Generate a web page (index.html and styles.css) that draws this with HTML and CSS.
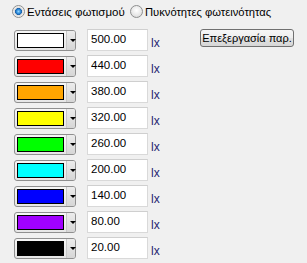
FILE: index.html
```html
<!DOCTYPE html>
<html>
<head>
    <title>Φωτισμός</title>
    <link rel="stylesheet" href="styles.css">
</head>
<body>
    <div class="modes">
        <label class="radio first"><span class="dot on"></span>Εντάσεις φωτισμού</label>
        <label class="radio"><span class="dot"></span>Πυκνότητες φωτεινότητας</label>
    </div>
    <div class="main">
        <div class="rows">
            <div class="row"><span class="combo"><span class="swatch" style="background:#ffffff"></span><span class="drop"></span></span><input class="value" value="500.00"><span class="unit">lx</span></div>
            <div class="row"><span class="combo"><span class="swatch" style="background:#ff0000"></span><span class="drop"></span></span><input class="value" value="440.00"><span class="unit">lx</span></div>
            <div class="row"><span class="combo"><span class="swatch" style="background:#ffa500"></span><span class="drop"></span></span><input class="value" value="380.00"><span class="unit">lx</span></div>
            <div class="row"><span class="combo"><span class="swatch" style="background:#ffff00"></span><span class="drop"></span></span><input class="value" value="320.00"><span class="unit">lx</span></div>
            <div class="row"><span class="combo"><span class="swatch" style="background:#00ff00"></span><span class="drop"></span></span><input class="value" value="260.00"><span class="unit">lx</span></div>
            <div class="row"><span class="combo"><span class="swatch" style="background:#00ffff"></span><span class="drop"></span></span><input class="value" value="200.00"><span class="unit">lx</span></div>
            <div class="row"><span class="combo"><span class="swatch" style="background:#0000ff"></span><span class="drop"></span></span><input class="value" value="140.00"><span class="unit">lx</span></div>
            <div class="row"><span class="combo"><span class="swatch" style="background:#a000ff"></span><span class="drop"></span></span><input class="value" value="80.00"><span class="unit">lx</span></div>
            <div class="row"><span class="combo"><span class="swatch" style="background:#000000"></span><span class="drop"></span></span><input class="value" value="20.00"><span class="unit">lx</span></div>
        </div>
        <button class="edit">Επεξεργασία παρ.</button>
    </div>
</body>
</html>
```
FILE: styles.css
```css
body {
    margin: 0;
    background: #f0f0f0;
    font-family: "Liberation Sans", Arial, sans-serif;
    font-size: 11px;
    color: #000;
}
.modes {
    display: flex;
    padding: 5px 0 0 12px;
    height: 13px;
}
.radio {
    display: flex;
    align-items: center;
    gap: 2px;
    height: 13px;
}
.radio.first {
    width: 118px;
    font-size: 11.5px;
}
.radio + .radio {
    font-size: 11.2px;
}
.dot {
    width: 11px;
    height: 11px;
    border: 1px solid #8e8f8f;
    border-radius: 50%;
    background: radial-gradient(circle at 50% 40%, #ffffff 0, #e6e6e6 60%, #d2d2d2 100%);
}
.dot.on {
    background: radial-gradient(circle, #8fd4ff 0, #2a87d6 28%, #1a5fa8 42%, #dcdcdc 48%, #f6f6f6 75%, #d0d0d0 100%);
}
.main {
    display: flex;
    margin-top: 11px;
}
.rows {
    display: flex;
    flex-direction: column;
    gap: 4px;
    padding-left: 14px;
}
.row {
    display: flex;
    height: 22px;
}
.combo {
    display: flex;
    box-sizing: border-box;
    width: 62px;
    height: 21px;
    margin-top: 1px;
    border: 1px solid #8f8f8f;
    border-radius: 3px;
    background: linear-gradient(#f7f7f7, #e6e6e6);
}
.swatch {
    box-sizing: border-box;
    width: 47px;
    height: 15px;
    margin: 2px 0 0 2px;
    border: 1px solid #000;
}
.drop {
    flex: 1;
    margin-left: 2px;
    border-left: 1px solid #c8c8c8;
    border-radius: 0 2px 2px 0;
    background: linear-gradient(#ececec, #d6d6d6);
    position: relative;
}
.drop::after {
    content: "";
    position: absolute;
    left: 3px;
    top: 8px;
    border-left: 3px solid transparent;
    border-right: 3px solid transparent;
    border-top: 3px solid #000;
}
.value {
    box-sizing: border-box;
    width: 61px;
    height: 22px;
    margin-left: 11px;
    padding: 0 0 2px 3px;
    border: 1px solid #d9d9d9;
    border-top-color: #cfcfcf;
    background: #fff;
    font-family: inherit;
    font-size: 11.5px;
    color: #000;
    outline: none;
}
.unit {
    width: 12px;
    margin-left: 3px;
    padding-top: 7px;
    font-size: 12px;
    color: #1f1f70;
}
.edit {
    box-sizing: border-box;
    width: 94px;
    height: 18px;
    margin-left: 37px;
    padding: 0;
    border: 1px solid #707070;
    border-radius: 3px;
    background: linear-gradient(#f6f6f6 0, #eeeeee 50%, #e2e2e2 51%, #d6d6d6 100%);
    font-family: inherit;
    font-size: 11px;
    color: #000;
}
```
